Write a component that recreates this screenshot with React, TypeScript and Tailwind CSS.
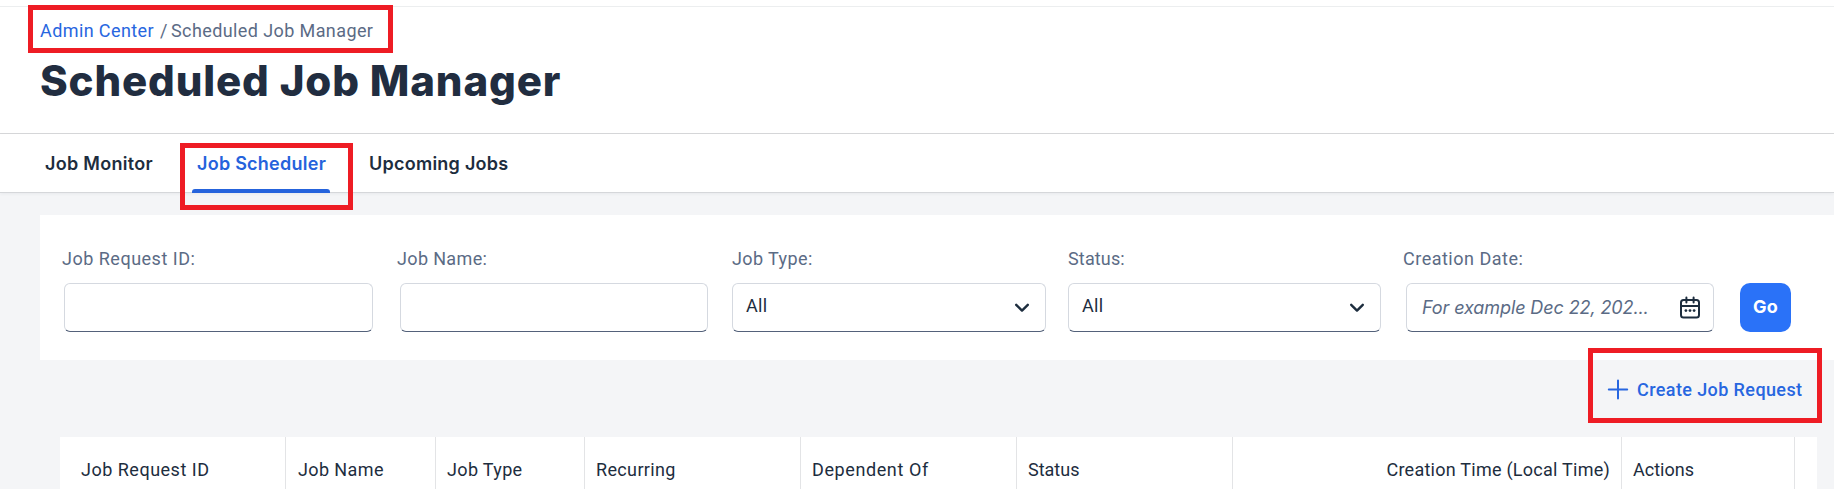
import type { ReactNode } from "react";

function Field({ label, tracking, className, children }: { label: string; tracking: string; className: string; children: ReactNode }) {
  return (
    <div className={`shrink-0 ${className}`}>
      <div className={`h-6 leading-6 whitespace-nowrap text-[#5b6b85] ${tracking}`}>{label}</div>
      <div className="mt-3">{children}</div>
    </div>
  );
}

const box = "flex h-[49px] items-center rounded-[6px] border border-[#d5d9e0] border-b-[#53617a] bg-white";

function Chevron() {
  return (
    <svg className="ml-auto" width="16" height="12" viewBox="0 0 16 12" fill="none" stroke="#1d2d3e" strokeWidth="2.4" strokeLinecap="round" strokeLinejoin="round">
      <path d="M2.2 2.8 8 8.6l5.8-5.8" />
    </svg>
  );
}

function CalendarIcon() {
  return (
    <svg className="ml-auto" width="22" height="24" viewBox="0 0 22 24" fill="none" stroke="#1d2d3e" strokeWidth="2" strokeLinecap="round">
      <rect x="2" y="4" width="18" height="17.6" rx="2.5" />
      <path d="M2 10h18M7.4 1.6v5M14.6 1.6v5" />
      <g fill="#1d2d3e" stroke="none">
        <circle cx="6.9" cy="14.6" r="1.4" />
        <circle cx="11" cy="14.6" r="1.4" />
        <circle cx="15.1" cy="14.6" r="1.4" />
      </g>
    </svg>
  );
}

const columns = [
  { title: "Job Request ID", cell: "w-[226px] pl-[21px] tracking-[0.5px]" },
  { title: "Job Name", cell: "w-[150px] pl-[12px] tracking-[0.4px]" },
  { title: "Job Type", cell: "w-[149px] pl-[11px] tracking-[0.35px]" },
  { title: "Recurring", cell: "w-[216px] pl-[11px] tracking-[0.35px]" },
  { title: "Dependent Of", cell: "w-[216px] pl-[11px] tracking-[0.6px]" },
  { title: "Status", cell: "w-[216px] pl-[11px] tracking-[0px]" },
  { title: "Creation Time (Local Time)", cell: "w-[389px] pr-[11px] text-right tracking-[0.25px]" },
  { title: "Actions", cell: "w-[173px] pl-[11px] tracking-[0px]" },
];

export default function App() {
  return (
    <div className="relative h-[489px] w-full overflow-hidden bg-[#f4f5f7] font-['Roboto','Liberation_Sans',sans-serif] text-[18px] text-[#1d2d3e]">
      <header className="h-[134px] border-b border-[#d7d8da] bg-white">
        <div className="h-[7px] border-b border-[#eceeef]" />
        <nav className="mt-3 flex h-6 pl-[40px] leading-6">
          <a className="w-[120px] whitespace-nowrap tracking-[0.4px] text-[#2766e0]">Admin Center</a>
          <span className="w-[11px] text-[#5b6b85]">/</span>
          <span className="tracking-[0.4px] whitespace-nowrap text-[#5b6b85]">Scheduled Job Manager</span>
        </nav>
        <h1 className="mt-[13px] pl-[40px] font-['Inter',sans-serif] text-[42px] leading-[50px] font-extrabold tracking-[0.85px] whitespace-nowrap text-[#212d40]">
          Scheduled Job Manager
        </h1>
      </header>
      <div className="flex h-[59px] border-b border-[#d5d7da] bg-white pl-[45px] font-['Inter',sans-serif] font-semibold shadow-[0_1px_3px_rgba(30,45,62,0.06)]">
        <div className="w-[147px] pt-[18px] leading-6 tracking-[0.3px] whitespace-nowrap">Job Monitor</div>
        <div className="flex w-[138px] flex-col justify-between pt-[18px] text-[#2563dc]">
          <span className="pl-[5px] leading-6 tracking-[0.25px] whitespace-nowrap">Job Scheduler</span>
          <span className="-mb-px h-1 rounded-t-[3px] bg-[#2563dc]" />
        </div>
        <div className="pt-[18px] pl-[39px] leading-6 tracking-[0.25px] whitespace-nowrap">Upcoming Jobs</div>
      </div>

      <section className="mt-[22px] ml-10 flex h-[145px] bg-white pt-8 pl-[22px]">
        <Field label="Job Request ID:" tracking="tracking-[0.5px]" className="w-[335px]">
          <div className={`${box} ml-[2px] w-[309px]`} />
        </Field>
        <Field label="Job Name:" tracking="tracking-[0.35px]" className="w-[335px]">
          <div className={`${box} ml-[3px] w-[308px]`} />
        </Field>
        <Field label="Job Type:" tracking="tracking-[0.4px]" className="w-[336px]">
          <div className={`${box} w-[314px] pr-[15px] pl-[13px]`}>
            <span className="pb-[4px] tracking-[0.3px]">All</span>
            <Chevron />
          </div>
        </Field>
        <Field label="Status:" tracking="tracking-[0.15px]" className="w-[335px]">
          <div className={`${box} w-[313px] pr-[15px] pl-[13px]`}>
            <span className="pb-[4px] tracking-[0.3px]">All</span>
            <Chevron />
          </div>
        </Field>
        <Field label="Creation Date:" tracking="tracking-[0.5px]" className="w-[337px]">
          <div className={`${box} ml-[3px] w-[308px] pr-[12px] pl-[15px]`}>
            <span className="font-['Inter',sans-serif] tracking-[-0.1px] whitespace-nowrap text-[#5b6b85] italic">For example Dec 22, 202...</span>
            <CalendarIcon />
          </div>
        </Field>
        <button className="mt-9 h-[49px] w-[51px] shrink-0 rounded-[10px] bg-[#2a72f8] pb-[2px] font-['Inter',sans-serif] text-[18px] font-bold tracking-[0.3px] text-white">
          Go
        </button>
      </section>

      <div className="flex h-[77px] items-start pt-[18px] pl-[1607px] text-[#2766e0]">
        <svg className="mt-px mr-2 shrink-0" width="22" height="22" viewBox="0 0 22 22" stroke="currentColor" strokeWidth="2" strokeLinecap="round">
          <path d="M11 1.5v18M1.8 10.5h18.4" />
        </svg>
        <span className="leading-6 font-medium tracking-[0.4px] whitespace-nowrap">Create Job Request</span>
      </div>

      <div className="ml-[60px] flex h-[60px] w-[1757px] bg-white">
        {columns.map((c) => (
          <div key={c.title} className={`shrink-0 border-r border-[#e3e4e6] pt-[21px] leading-6 font-[450] whitespace-nowrap ${c.cell}`}>
            {c.title}
          </div>
        ))}
      </div>

      <div className="absolute top-[5px] left-[28px] h-[48px] w-[365px] border-5 border-[#ee1c24]" />
      <div className="absolute top-[143px] left-[180px] h-[67px] w-[173px] border-5 border-[#ee1c24]" />
      <div className="absolute top-[348px] left-[1588px] h-[75px] w-[234px] border-5 border-[#ee1c24]" />
    </div>
  );
}
